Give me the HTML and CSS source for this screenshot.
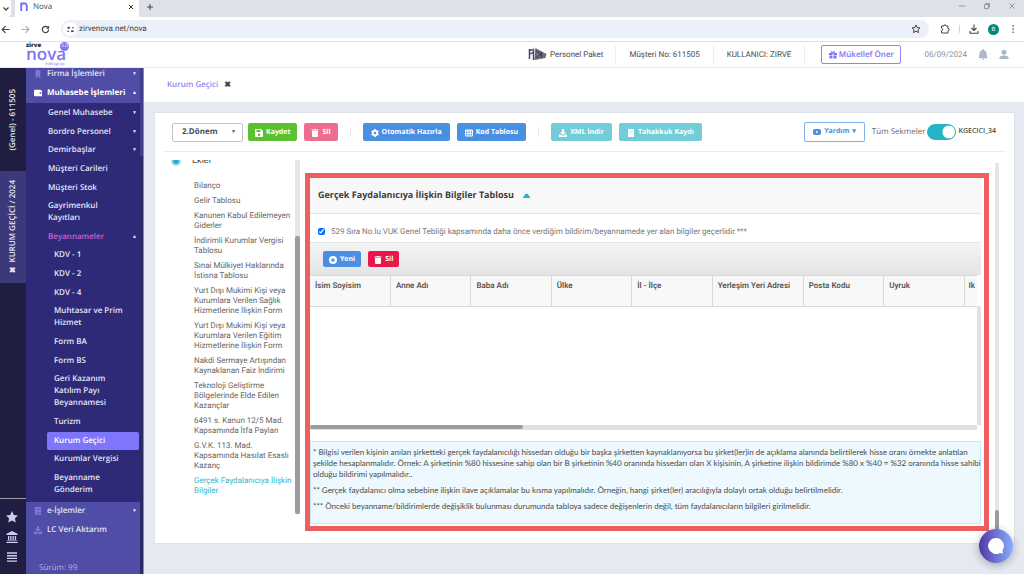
FILE: index.html
```html
<!DOCTYPE html>
<html lang="tr">
<head>
<meta charset="utf-8">
<title>Nova</title>
<link rel="stylesheet" href="styles.css">
</head>
<body>
<svg class="defs" aria-hidden="true">
  <symbol id="trash" viewBox="0 0 14 16"><path fill="currentColor" d="M0 1h4l1-1h4l1 1h4v2H0zM1 4h12v10q0 2-2 2H3q-2 0-2-2z"/><path stroke="#fff" stroke-opacity=".3" d="M4.500 6v8M7 6v8M9.500 6v8"/></symbol>
  <symbol id="download" viewBox="0 0 16 16"><path fill="currentColor" d="M6 0h4v6h4l-6 6-6-6h4zM0 11h4l4 3 4-3h4v5H0z"/></symbol>
</svg>

<div class="tabstrip">
  <button class="tab-search" aria-label="Sekme ara"><svg viewBox="0 0 8 8"><path d="M1.500 2.500 4 5l2.500-2.500" fill="none" stroke="#444" stroke-width="1.300"/></svg></button>
  <div class="browser-tab">
    <svg class="favicon" viewBox="0 0 8 9"><path d="M1.200 9V.5M1.200 4Q1.500 1.300 4 1.300T6.800 4V9" fill="none" stroke="#7d76f5" stroke-width="2"/></svg>
    <span class="grow">Nova</span>
    <button aria-label="Sekmeyi kapat"><svg viewBox="0 0 6 6"><path d="m1 1 4 4M5 1 1 5" stroke="#333"/></svg></button>
  </div>
  <button class="new-tab" aria-label="Yeni sekme"><svg viewBox="0 0 8 8"><path d="M4 1v6M1 4h6" stroke="#444"/></svg></button>
  <div class="window-controls">
    <svg viewBox="0 0 8 8"><path d="M1 4h6" stroke="#999"/></svg>
    <svg viewBox="0 0 8 8"><path d="M1.500 2.500h4v4h-4zM3 2.500v-1h3.500V5H5.500" fill="none" stroke="#999"/></svg>
    <svg viewBox="0 0 8 8"><path d="m1.500 1.500 5 5m0-5-5 5" stroke="#999"/></svg>
  </div>
</div>

<div class="browser-bar">
  <button aria-label="Geri"><svg viewBox="0 0 8 8"><path d="M7.500 4H1M4 1 1 4l3 3" fill="none" stroke="#444"/></svg></button>
  <button aria-label="İleri"><svg viewBox="0 0 8 8"><path d="M.5 4H7M4 1l3 3-3 3" fill="none" stroke="#aaa"/></svg></button>
  <button aria-label="Yenile"><svg viewBox="0 0 8 8"><path d="M6.800 4A2.800 2.800 0 1 1 6 2" fill="none" stroke="#444" stroke-width="1.100"/><path d="M7.200.5v2.800H4.400z" fill="#444"/></svg></button>
  <div class="address">
    <span class="site"><svg viewBox="0 0 8 8"><path d="M0 2h3M5.500 2H8M0 6h2.500M5 6h3" stroke="#444"/><circle cx="2.200" cy="2" r="1.200" fill="#444"/><circle cx="5.800" cy="6" r="1.200" fill="#444"/></svg></span>
    <input class="url" type="text" aria-label="Adres" value="zirvenova.net/nova">
    <svg class="star" viewBox="0 0 10 10"><path d="m5 1 1.200 2.600 2.800.3-2.100 1.900.6 2.800L5 7.200 2.500 8.600l.6-2.800L1 3.900l2.800-.3z" fill="none" stroke="#444"/></svg>
  </div>
  <div class="extensions">
    <svg viewBox="0 0 10 10"><path d="M1.500 2H4q0-1.300 1-1.300T6 2h2v2.500q1.300 0 1.300 1T8 6.500V9H1.500V6.800q1.200-.3 1.200-1.300T1.500 4.200z" fill="none" stroke="#444"/></svg>
    <i class="bar-divider"></i>
    <svg viewBox="0 0 10 10"><path d="M5 .5v5.500M2.500 4 5 6.500 7.500 4M1 7v2.300h8V7" fill="none" stroke="#444" stroke-width="1.100"/></svg>
    <span class="profile">B</span>
    <svg viewBox="0 0 10 10"><path d="M4.500 1h1.200v1.500H4.500zm0 3.200h1.200v1.500H4.500zm0 3.200h1.200v1.500H4.500z" fill="#444"/></svg>
  </div>
</div>

<header class="app-header">
  <div class="logo">
    <span class="logo-top">zirve</span>
    <span class="logo-name">nova</span>
    <span class="logo-version">3.0</span>
    <span class="logo-group">mikrogrup</span>
  </div>
  <div class="header-info">
    <a class="package" href="#"><svg viewBox="0 0 18 15"><path d="M1 2v10M1 3h5M2 7l3-2v8" fill="none" stroke="#4a4358" stroke-width="1.500"/><path d="m7 1 11 6-1 4-11 2z" fill="#706a7b"/><path d="m7 4 6 3-6 4M13 5v6" fill="none" stroke="#3d3749"/><path d="M4 1 6 .5v3" fill="#b8a5dd"/></svg>Personel Paket</a>
    <span class="info-cell">Müşteri No: 611505</span>
    <span class="info-cell user">KULLANICI: ZIRVE</span>
  </div>
  <button class="suggest"><svg viewBox="0 0 16 16"><path fill="currentColor" d="M0 4h7v4H0zm9 0h7v4H9zM1 9h6v6H1zm8 0h6v6H9z"/><path d="M8 4Q4 4 4 2t2-1 2 3q0-3 2-3t2 1-4 2" fill="none" stroke="currentColor" stroke-width="1.800"/></svg>Mükellef Öner</button>
  <div class="header-end">
    <time>06/09/2024</time>
    <svg viewBox="0 0 10 12"><path fill="#adb8c6" d="M5 0q1 0 1 1 3 1 3 4v3l1 1.500v.5H0v-.5L1 8V5q0-3 3-4 0-1 1-1M3.500 10.500h3Q6 12 5 12t-1.500-1.500"/></svg>
    <svg viewBox="0 0 10 10"><circle cx="5" cy="2.800" r="2.500" fill="#adb8c6"/><path fill="#adb8c6" d="M.5 9.500V8Q1 6 5 6t4.500 2v1.500z"/></svg>
  </div>
</header>

<div class="app">
  <aside class="rail">
    <div class="rail-tab company"><span>(Genel) - 611505</span></div>
    <div class="rail-tab active"><span><b>✖</b> KURUM GEÇİCİ / 2024</span></div>
    <div class="rail-tools">
      <button aria-label="Favoriler"><svg viewBox="0 0 12 12"><path fill="#c9cdf6" d="m6 0 1.800 3.900 4.200.5-3.100 2.900.8 4.200L6 9.400l-3.700 2.100.8-4.200L0 4.400l4.200-.5z"/></svg></button>
      <button aria-label="Kurumlar"><svg viewBox="0 0 12 12"><path fill="#c9cdf6" d="m6 0 5.500 2.800V4H.5V2.800zM2 5h1.300v4H2zm2.200 0h1.300v4H4.200zm2.300 0h1.300v4H6.500zm2.300 0h1.300v4H8.800zM1 9.500h10v.8H1zM.3 11h11.400v1H.3z"/></svg></button>
      <button aria-label="Menü"><svg viewBox="0 0 12 12"><path stroke="#c9cdf6" stroke-width="1.400" d="M1 2h10M1 4.700h10M1 7.400h10M1 10.100h10"/></svg></button>
    </div>
  </aside>

  <nav class="sidebar">
    <div class="menu">
      <a class="top" href="#"><svg viewBox="0 0 10 10"><path fill="#7b76e3" d="M2 0h6v10H6V8H4v2H2z"/></svg><span>Firma İşlemleri</span><i class="arrow">▼</i></a>
      <a class="top strong" href="#"><svg viewBox="0 0 10 10"><path fill="#fff" d="M1 1h7l1 1h1v7H1L0 8V2zm6 3v2h2V4z"/></svg><span>Muhasebe İşlemleri</span><i class="arrow">▲</i></a>
      <div class="submenu">
        <a href="#"><span>Genel Muhasebe</span><i class="arrow">▼</i></a>
        <a href="#"><span>Bordro Personel</span><i class="arrow">▼</i></a>
        <a href="#"><span>Demirbaşlar</span><i class="arrow">▼</i></a>
        <a href="#"><span>Müşteri Carileri</span></a>
        <a href="#"><span>Müşteri Stok</span></a>
        <a href="#"><span>Gayrimenkul<br>Kayıtları</span></a>
        <a class="open" href="#"><span>Beyannameler</span><i class="arrow">▲</i></a>
        <a class="leaf" href="#">KDV - 1</a>
        <a class="leaf" href="#">KDV - 2</a>
        <a class="leaf" href="#">KDV - 4</a>
        <a class="leaf" href="#">Muhtasar ve Prim<br>Hizmet</a>
        <a class="leaf" href="#">Form BA</a>
        <a class="leaf" href="#">Form BS</a>
        <a class="leaf" href="#">Geri Kazanım<br>Katılım Payı<br>Beyannamesi</a>
        <a class="leaf" href="#">Turizm</a>
        <a class="leaf selected" href="#">Kurum Geçici</a>
        <a class="leaf" href="#">Kurumlar Vergisi</a>
        <a class="leaf" href="#">Beyanname<br>Gönderim</a>
      </div>
      <a class="top" href="#"><svg viewBox="0 0 10 10"><path fill="#7b76e3" d="M2 0h7v10H2L1 9V1z"/><path stroke="#504da6" d="M3 3h5M3 7.500h6"/></svg><span>e-İşlemler</span><i class="arrow">▼</i></a>
      <a class="top" href="#"><svg class="dim"><use href="#download"/></svg><span>LC Veri Aktarım</span></a>
      <p class="version">Sürüm: 99</p>
    </div>
    <div class="menu-scroll"><i></i></div>
  </nav>

  <main class="main">
    <div class="page-tabs"><a href="#">Kurum Geçici</a><button aria-label="Kapat">✖</button></div>
    <div class="workspace">
      <section class="panel">
        <div class="toolbar">
          <div class="period"><select aria-label="Dönem"><option>2.Dönem</option></select></div>
          <button class="btn green"><svg viewBox="0 0 16 16"><path fill="currentColor" fill-rule="evenodd" d="M1 0h11l4 4v11l-1 1H1l-1-1V1zm2 2v4h8V2zm5 7a2.500 2.500 0 1 0 .1 5A2.500 2.500 0 0 0 8 9"/></svg>Kaydet</button>
          <button class="btn pink"><svg><use href="#trash"/></svg>Sil</button>
          <i class="divider"></i>
          <button class="btn blue"><svg viewBox="0 0 16 16"><circle cx="8" cy="8" r="4.500" fill="none" stroke="currentColor" stroke-width="4"/><path d="M8 0v3M8 13v3M1 4l3 2M12 10l3 2M1 12l3-2M12 6l3-2" stroke="currentColor" stroke-width="3"/></svg>Otomatik Hazırla</button>
          <button class="btn blue"><svg viewBox="0 0 16 16"><path fill="none" stroke="currentColor" stroke-width="2" d="M1 2h14v12H1zM1 4h14M1 9h14M6 4v10M10.500 4v10"/></svg>Kod Tablosu</button>
          <i class="divider"></i>
          <button class="btn teal"><svg><use href="#download"/></svg>XML İndir</button>
          <button class="btn teal"><svg viewBox="0 0 14 16"><path fill="currentColor" d="M1 0h12v16H1z"/><path stroke="#72cdd9" stroke-opacity=".5" d="M3 4h8M3 7h8M3 10h8"/></svg>Tahakkuk Kaydı</button>
          <button class="btn help"><svg viewBox="0 0 18 16"><rect y="1" width="18" height="14" rx="4" fill="currentColor"/><path fill="#fff" d="m7 5 5 3-5 3z"/></svg>Yardım <i>▾</i></button>
          <label class="switch">Tüm Sekmeler<input type="checkbox" checked></label>
          <span class="code">KGECICI_34</span>
        </div>
        <div class="content">
          <div class="outline">
            <div class="outline-list">
              <h2><svg viewBox="0 0 10 10"><circle cx="5" cy="5" r="5" fill="#a5e0e8"/><circle cx="5" cy="5" r="3" fill="#27b3c7"/></svg>Ekler</h2>
              <a href="#">Bilanço</a>
              <a href="#">Gelir Tablosu</a>
              <a href="#">Kanunen Kabul Edilemeyen<br>Giderler</a>
              <a href="#">İndirimli Kurumlar Vergisi<br>Tablosu</a>
              <a href="#">Sınai Mülkiyet Haklarında<br>İstisna Tablosu</a>
              <a href="#">Yurt Dışı Mukimi Kişi veya<br>Kurumlara Verilen Sağlık<br>Hizmetlerine İlişkin Form</a>
              <a href="#">Yurt Dışı Mukimi Kişi veya<br>Kurumlara Verilen Eğitim<br>Hizmetlerine İlişkin Form</a>
              <a href="#">Nakdi Sermaye Artışından<br>Kaynaklanan Faiz İndirimi</a>
              <a href="#">Teknoloji Geliştirme<br>Bölgelerinde Elde Edilen<br>Kazançlar</a>
              <a href="#">6491 s. Kanun 12/5 Mad.<br>Kapsamında İtfa Payları</a>
              <a href="#">G.V.K. 113. Mad.<br>Kapsamında Hasılat Esaslı<br>Kazanç</a>
              <a class="current" href="#">Gerçek Faydalanıcıya İlişkin<br>Bilgiler</a>
            </div>
            <div class="scroll outline-scroll"><i></i></div>
          </div>

          <section class="frame">
            <h1>Gerçek Faydalanıcıya İlişkin Bilgiler Tablosu <svg viewBox="0 0 8 5"><path d="M0 5 3 .8h2L8 5z" fill="#27b3c7"/></svg></h1>
            <label class="confirm"><input type="checkbox" checked>529 Sıra No.lu VUK Genel Tebliği kapsamında daha önce verdiğim bildirim/beyannamede yer alan bilgiler geçerlidir.***</label>
            <div class="grid-tools">
              <button class="btn blue"><svg viewBox="0 0 16 16"><circle cx="8" cy="8" r="8" fill="currentColor"/><path d="M8 4v8M4 8h8" stroke="#4a90e2" stroke-width="2.500"/></svg>Yeni</button>
              <button class="btn red"><svg><use href="#trash"/></svg>Sil</button>
            </div>
            <div class="grid">
              <div class="grid-view">
                <table>
                  <colgroup><col><col><col><col><col><col class="wide"><col><col><col></colgroup>
                  <thead><tr><th>İsim Soyisim</th><th>Anne Adı</th><th>Baba Adı</th><th>Ülke</th><th>İl - İlçe</th><th>Yerleşim Yeri Adresi</th><th>Posta Kodu</th><th>Uyruk</th><th>Ik</th></tr></thead>
                </table>
              </div>
              <div class="grid-vscroll"></div>
            </div>
            <div class="grid-hscroll"><i></i></div>
            <div class="notice">
              <p>* Bilgisi verilen kişinin anılan şirketteki gerçek faydalanıcılığı hissedarı olduğu bir başka şirketten kaynaklanıyorsa bu şirket(ler)in de açıklama alanında belirtilerek hisse oranı örnekte anlatılan<br>şekilde hesaplanmalıdır. Örnek: A şirketinin %80 hissesine sahip olan bir B şirketinin %40 oranında hissedarı olan X kişisinin, A şirketine ilişkin bildirimde %80 x %40 = %32 oranında hisse sahibi<br>olduğu bildirimi yapılmalıdır..</p>
              <p>** Gerçek faydalanıcı olma sebebine ilişkin ilave açıklamalar bu kısma yapılmalıdır. Örneğin, hangi şirket(ler) aracılığıyla dolaylı ortak olduğu belirtilmelidir.</p>
              <p>*** Önceki beyanname/bildirimlerde değişiklik bulunması durumunda tabloya sadece değişenlerin değil, tüm faydalanıcıların bilgileri girilmelidir.</p>
            </div>
          </section>
          <div class="scroll page-scroll"><i></i></div>
        </div>
      </section>
    </div>
  </main>
</div>
<button class="chat" aria-label="Sohbet"><svg viewBox="0 0 16 16"><path fill="#fff" d="M8 0a8 8 0 1 0 4 15l3 .5-.5-3A8 8 0 0 0 8 0"/></svg></button>
</body>
</html>
```
FILE: styles.css
```css
* { box-sizing: border-box; }
body {
  margin: 0;
  height: 100vh;
  display: flex;
  flex-direction: column;
  overflow: hidden;
  background: #fff;
  color: #4c4c4c;
  font: 8px/12px "Open Sans", "Noto Sans", sans-serif;
  text-rendering: geometricPrecision;
}
a { color: inherit; text-decoration: none; }
button, input, select { font: inherit; color: inherit; text-rendering: inherit; }
button { display: flex; align-items: center; justify-content: center; border: 0; padding: 0; background: none; white-space: nowrap; }
i { font-style: normal; }
svg { flex: none; }
.defs { position: absolute; width: 0; height: 0; }
.grow { flex: 1; }
.url, .header-info, .header-end, .outline-list, .confirm, table { font-family: Roboto, "Open Sans", sans-serif; }

/* browser chrome */
.tabstrip { display: flex; align-items: stretch; height: 17px; background: #dde1e8; flex: none; }
.tab-search { width: 11px; margin-right: 4px; background: #fff; border-radius: 0 0 4px 0; }
.tab-search svg, .new-tab svg { width: 8px; height: 8px; }
.browser-tab { display: flex; align-items: center; gap: 5px; width: 124px; padding: 0 5px 4px; background: #fff; }
.favicon { width: 8px; height: 9px; }
.browser-tab button svg { width: 6px; height: 6px; }
.new-tab { width: 22px; padding-bottom: 4px; }
.window-controls { display: flex; gap: 17px; margin-left: auto; padding: 2px 8px 0 0; }
.window-controls svg { width: 8px; height: 8px; }
.browser-bar { display: flex; align-items: center; gap: 11px; height: 25px; padding: 0 6px 0 1px; border-bottom: 1px solid #dcdfe3; flex: none; }
.browser-bar button svg { width: 9px; height: 9px; }
.address { flex: 1; display: flex; align-items: center; height: 18px; padding: 0 8px 0 2px; border-radius: 9px; background: #ebeff9; }
.site { display: grid; place-items: center; width: 14px; height: 14px; border-radius: 7px; background: #fff; }
.site svg { width: 7px; height: 7px; }
.url { flex: 1; border: 0; padding: 0 2px; background: none; color: #444; outline: 0; }
.star { width: 10px; height: 10px; }
.extensions { display: flex; align-items: center; gap: 9px; }
.extensions svg { width: 10px; height: 10px; }
.bar-divider { width: 1px; height: 8px; background: #cbd5f5; }
.profile { width: 11px; height: 11px; border-radius: 6px; background: #00897b; color: #fff; font-size: 6px; line-height: 11px; text-align: center; }

/* application header */
.app-header { display: flex; align-items: center; height: 26px; padding-right: 15px; border-bottom: 1px solid #e8e8ea; flex: none; }
.logo { display: grid; grid-template: 6px 14px 5px / 34px 10px; width: 46px; margin-left: 26px; color: #7d76f5; }
.logo-top { color: #222; font-size: 6px; line-height: 6px; font-weight: 800; }
.logo-name { grid-area: 2 / 1; font-size: 17px; line-height: 12px; font-weight: 600; }
.logo-version { grid-area: 1 / 2; width: 9px; height: 9px; border-radius: 5px; background: #7d76f5; color: #fff; font-size: 5px; line-height: 9px; text-align: center; }
.logo-group { grid-area: 3 / 1 / 4 / 3; padding-left: 19px; font-size: 4px; line-height: 5px; }
.header-info { display: flex; align-items: center; margin-left: auto; }
.package { display: flex; align-items: center; gap: 3px; padding-right: 12px; }
.package svg { width: 19px; height: 15px; }
.info-cell { padding: 3px 13px; border-left: 1px solid #ececef; }
.info-cell.user { border-right: 1px solid #ececef; }
.suggest { gap: 2px; width: 80px; height: 19px; margin: 0 23px 0 16px; border: 1px solid #8b85f5; border-radius: 2px; color: #7a73f2; font-weight: 600; }
.suggest svg { width: 8px; height: 8px; }
.header-end { display: flex; align-items: center; gap: 11px; color: #8f8f94; }
.header-end svg { width: 10px; height: 11px; }

/* left rail */
.app { flex: 1; display: flex; min-height: 0; }
.rail { display: flex; flex-direction: column; width: 26px; background: #201e40; color: #e4e4f2; flex: none; }
.rail-tab { display: flex; align-items: center; justify-content: center; font-weight: 600; }
.rail-tab span { writing-mode: vertical-rl; transform: rotate(180deg); white-space: nowrap; }
.company { height: 103px; }
.active { height: 112px; background: #3b397a; }
.rail-tools { display: flex; flex-direction: column; gap: 8px; margin-top: auto; padding: 12px 6px 11px 4px; border-top: 1px solid #9d9daf; }
.rail-tools svg { width: 12px; height: 12px; }

/* menu */
.sidebar { display: flex; width: 118px; background: #504da6; color: #e6e5f6; font-weight: 600; flex: none; }
.menu { flex: 1; display: flex; flex-direction: column; }
.menu a { display: flex; align-items: center; }
.menu span { flex: 1; white-space: nowrap; }
.menu .top { gap: 5px; padding: 3px 3px 4px 8px; }
.menu .top:first-child { padding-top: 0; }
.top svg { width: 8px; height: 8px; }
.dim { color: #7b76e3; }
.strong { font-weight: 700; color: #fff; }
.arrow { width: 5px; font-size: 5px; text-align: center; }
.submenu { flex: 1; display: flex; flex-direction: column; justify-content: space-between; padding: 1px 0 3px; background: #2e2a77; }
.submenu a { padding: 3px 3px 3px 22px; }
.submenu .leaf { margin-left: 21px; padding-left: 7px; margin-right: 1px; border-radius: 2px; }
.submenu .open { color: #c964d3; }
.open .arrow { color: #e6e5f6; }
.submenu .selected { background: #7d76fb; color: #fff; }
.version { margin: 22px 0 0 13px; color: #b4b2e0; font-weight: 400; }
.menu-scroll { width: 4px; background: #2c2a66; border-right: 1px solid #8886ae; }
.menu-scroll i { display: block; height: 88px; background: #423f8c; }

/* main area */
.main { flex: 1; display: flex; flex-direction: column; min-width: 0; background: #e6e9f1; }
.page-tabs { display: flex; align-items: center; gap: 6px; height: 34px; padding-left: 23px; background: #fff; color: #8f88f8; font-weight: 600; flex: none; }
.page-tabs button { color: #444; }
.workspace { flex: 1; display: flex; min-height: 0; padding: 10px 9px 30px 10px; }
.panel { flex: 1; display: flex; flex-direction: column; min-width: 0; background: #fff; border: 1px solid #dfe1e8; }
.toolbar { display: flex; align-items: center; gap: 7px; height: 39px; margin: 0 8px; padding: 0 10px 0 9px; border-bottom: 1px solid #ededf0; flex: none; }
.period { display: flex; align-items: center; width: 71px; height: 19px; margin-right: -2px; border: 1px solid #c4c4c8; border-radius: 2px; }
.period select { flex: 1; width: 100%; height: 17px; padding: 0 9px; border: 0; font-weight: 700; appearance: none; background: none; }
.period::after { content: "▼"; width: 5px; margin-right: 6px; font-size: 5px; }
.btn { gap: 3px; height: 18px; padding: 1px 7px 0; border-radius: 2px; color: #fff; font-size: 7px; font-weight: 700; }
.btn svg { width: 8px; height: 8px; }
.green { background: #5bc130; }
.pink { background: #ee6f8d; }
.blue { background: #4a90e2; padding: 1px 8px 0; }
.teal { background: #72cdd9; padding: 1px 8px 0; }
.red { background: #e8184c; }
.divider { width: 1px; height: 10px; margin: 0 5px; background: #e8e8ea; }
.toolbar .help { height: 20px; margin-left: auto; padding: 0 8px; border: 1px solid #82b1ea; background: #fff; color: #4a90e2; }
.switch { display: flex; align-items: center; gap: 2px; color: #666; white-space: nowrap; }
.switch input { width: 29px; height: 16px; margin: 0; appearance: none; border-radius: 8px; border: 1px solid #27b3c7; background: radial-gradient(circle at 21px 7px, #fff 6px, #27b3c7 7px); }
.code { margin-left: -5px; font-size: 7px; font-weight: 600; }

.content { flex: 1; display: flex; min-height: 0; padding: 8px 15px 12px 16px; }
.outline { display: flex; width: 129px; overflow: hidden; flex: none; }
.outline-list { flex: 1; display: flex; flex-direction: column; gap: 5px; margin-top: -5px; line-height: 10px; color: #666; white-space: nowrap; }
.outline h2 { display: flex; align-items: center; gap: 11px; margin: 0 0 9px; color: #444; font-size: 9px; line-height: 12px; font-weight: 400; }
.outline h2 svg { width: 10px; height: 10px; }
.outline a { margin-left: 23px; }
.outline .current { color: #35b6c8; }
.scroll { width: 5px; background: #e6e6e6; display: flex; flex-direction: column; flex: none; }
.scroll i { background: #9b9b9b; border-radius: 2px; }
.outline-scroll { margin-bottom: 17px; padding-top: 76px; }
.outline-scroll i { flex: 1; }
.page-scroll { width: 4px; margin: 3px 0 0 6px; justify-content: flex-end; }
.page-scroll i { height: 21px; }

/* highlighted section */
.frame { flex: 1; display: flex; flex-direction: column; min-width: 0; margin: 13px 0 0 5px; padding-right: 3px; border: 5px solid #ef5f5f; }
.frame h1 { display: flex; align-items: center; gap: 8px; margin: 0; height: 36px; padding: 0 8px 1px; background: #f8f8f8; border-bottom: 1px solid #e2e2e2; color: #3c3c3c; font-size: 9px; font-weight: 700; flex: none; }
.frame h1 svg { width: 9px; height: 5px; }
.confirm { display: flex; align-items: center; gap: 6px; height: 28px; padding: 7px 8px 0; color: #777; flex: none; }
.confirm input { width: 7px; height: 7px; margin: 0; }
.grid-tools { display: flex; align-items: center; gap: 7px; height: 33px; padding: 0 13px; background: linear-gradient(#f4f4f4, #e4e4e4); border-top: 1px solid #e4e4e4; flex: none; }
.grid-tools .btn { height: 16px; padding: 1px 6px 0; }
.grid { flex: 1; display: flex; min-height: 0; }
.grid-view { flex: 1; overflow: hidden; background: linear-gradient(#f8f8f8, #f8f8f8) 0 0 / 100% 31px no-repeat; }
table { table-layout: fixed; width: 735px; border-collapse: collapse; }
.wide { width: 91px; }
th { height: 31px; padding: 4px 5px; border: solid #d8d8d8; border-width: 1px 1px 1px 0; text-align: left; vertical-align: top; white-space: nowrap; font-size: 8px; font-weight: 600; color: #555; }
th:last-child { padding-left: 4px; }
.grid-vscroll { width: 4px; margin-top: 31px; background: #e2e2e2; }
.grid-hscroll { height: 5px; margin-right: 4px; background: #e2e2e2; flex: none; }
.grid-hscroll i { display: block; width: 32%; height: 4px; border-radius: 2px; background: #9b9b9b; }
.notice { margin: 11px 0 2px; padding: 5px 2px 11px; border: 1px solid #c6ebf8; background: #edf9fe; font-family: Lato, "Open Sans", sans-serif; line-height: 11px; white-space: nowrap; flex: none; }
.notice p { margin: 0 0 5px; }
.notice p:last-child { margin: 0; }

.chat { position: fixed; right: 11px; bottom: 11px; width: 34px; height: 34px; border-radius: 17px; background: linear-gradient(90deg, #5338a5, #86acff); box-shadow: 0 2px 8px rgba(0, 0, 0, .3); }
.chat svg { width: 16px; height: 16px; }
```
